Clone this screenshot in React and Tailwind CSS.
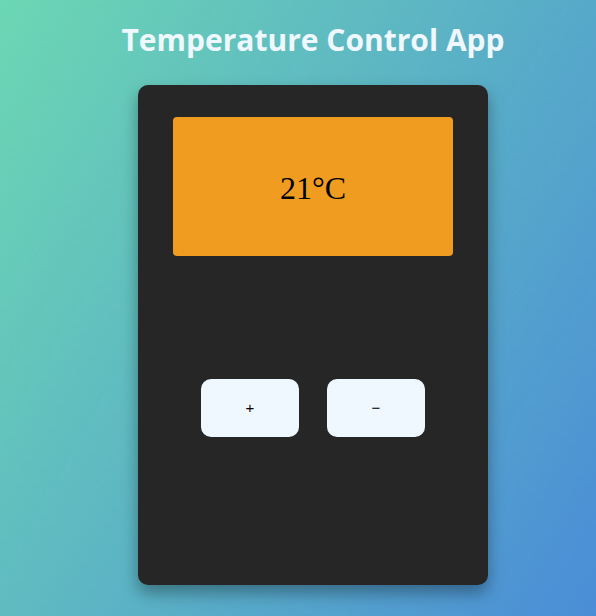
export default function App() {
  return (
    <div className="min-h-[616px] w-full bg-[linear-gradient(120deg,#6cd7b3,#4a8dd7)] pl-[30px] flex flex-col items-center overflow-hidden">
      <h1 className="mt-[19px] text-[30px] leading-[42px] font-bold text-[#f0f8ff] font-['Open_Sans',sans-serif]">
        Temperature Control App
      </h1>
      <div className="mt-[24px] w-[350px] h-[500px] bg-[#262626] rounded-[10px] shadow-[0_8px_16px_rgba(0,0,0,0.35)] flex flex-col items-center pt-[32px]">
        <div className="w-[280px] h-[139px] bg-[#f09c20] rounded-[4px] flex items-center justify-center">
          <span className="text-[32px] text-black font-['Liberation_Serif',serif] pt-[2px]">21°C</span>
        </div>
        <div className="mt-[123px] flex gap-[28px]">
          <button className="w-[98px] h-[58px] bg-[#f0f8ff] rounded-[10px] text-[15px] text-black font-['Liberation_Sans',sans-serif]">+</button>
          <button className="w-[98px] h-[58px] bg-[#f0f8ff] rounded-[10px] text-[15px] text-black font-['Liberation_Sans',sans-serif]">−</button>
        </div>
      </div>
    </div>
  );
}
